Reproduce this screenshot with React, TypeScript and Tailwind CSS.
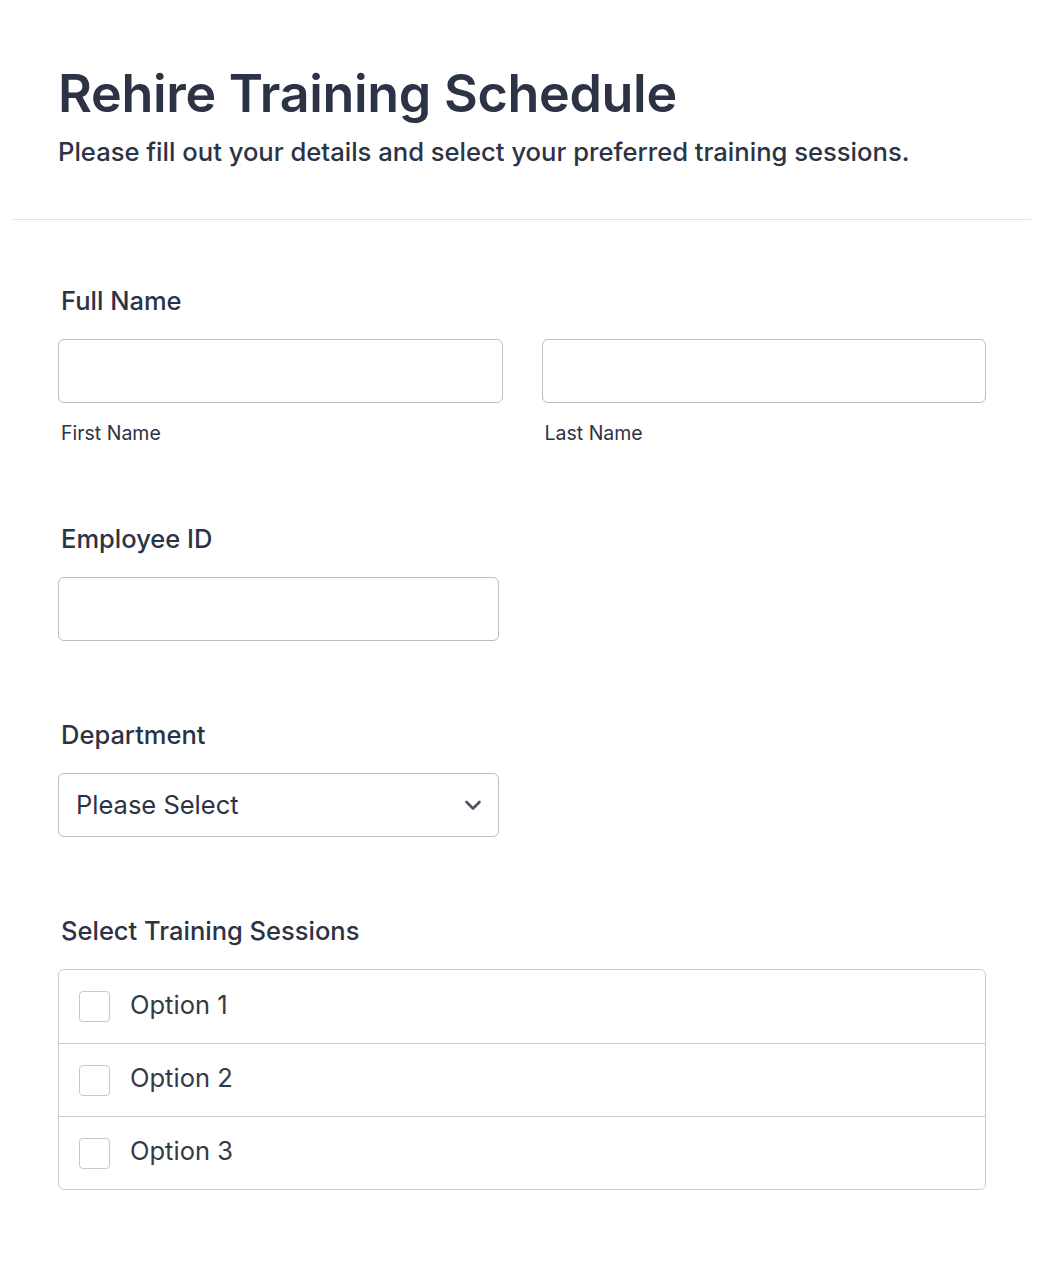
import { useState } from 'react';

const OPTIONS = ['Option 1', 'Option 2', 'Option 3'];

function Label({ children }: { children: React.ReactNode }) {
  return <label className="block pl-[3px] text-[25.5px] font-medium leading-[34px] text-[#2c3345]">{children}</label>;
}

export default function App() {
  const [checked, setChecked] = useState<Record<string, boolean>>({});

  return (
    <div className="min-h-screen bg-white font-['Inter',_'Liberation_Sans',_sans-serif] text-[#2c3345]">
      <div className="mx-[13px]">
        {/* Header */}
        <header className="px-[45px] pt-[63px] pb-[49px] border-b border-[#e0e2e7]">
          <h1 className="text-[52px] font-semibold leading-[62px] tracking-[-0.3px]">Rehire Training Schedule</h1>
          <p className="mt-[9px] text-[25.6px] font-medium leading-[36px]">
            Please fill out your details and select your preferred training sessions.
          </p>
        </header>

        <form className="px-[45px] pt-[64px]">
          {/* Full Name */}
          <section>
            <Label>Full Name</Label>
            <div className="mt-[21px] grid grid-cols-2 gap-[39px]">
              <div>
                <input className="block h-[64px] w-full rounded-[6px] border border-[#b8bdc9] px-4 text-[24px] outline-none" />
                <span className="mt-[18px] block pl-[3px] text-[19.5px] leading-[24px]">First Name</span>
              </div>
              <div>
                <input className="block h-[64px] w-full rounded-[6px] border border-[#b8bdc9] px-4 text-[24px] outline-none" />
                <span className="mt-[18px] block pl-[3px] text-[19.5px] leading-[24px]">Last Name</span>
              </div>
            </div>
          </section>

          {/* Employee ID */}
          <section className="mt-[77px]">
            <Label>Employee ID</Label>
            <input className="mt-[21px] block h-[64px] w-[441px] rounded-[6px] border border-[#b8bdc9] px-4 text-[24px] outline-none" />
          </section>

          {/* Department */}
          <section className="mt-[77px]">
            <Label>Department</Label>
            <div className="mt-[21px] flex h-[64px] w-[441px] items-center justify-between rounded-[6px] border border-[#b8bdc9] pl-[17px] pr-[16px]">
              <span className="text-[25.5px]">Please Select</span>
              <svg width="18" height="12" viewBox="0 0 18 12" fill="none">
                <path d="M2.5 3l6.5 6.5L15.5 3" stroke="#4b5262" strokeWidth="2.6" strokeLinecap="round" strokeLinejoin="round" />
              </svg>
            </div>
          </section>

          {/* Training sessions */}
          <section className="mt-[77px]">
            <Label>Select Training Sessions</Label>
            <div className="mt-[21px] rounded-[6px] border border-[#c9ccd3]">
              {OPTIONS.map((opt, i) => (
                <label
                  key={opt}
                  className={`flex h-[73px] cursor-pointer items-center gap-[20px] pl-[20px] ${i > 0 ? 'border-t border-[#c9ccd3]' : ''}`}
                >
                  <input
                    type="checkbox"
                    checked={!!checked[opt]}
                    onChange={() => setChecked((c) => ({ ...c, [opt]: !c[opt] }))}
                    className="h-[31px] w-[31px] appearance-none rounded-[4px] border border-[#c3c8d2] bg-white"
                  />
                  <span className="-mt-[3px] text-[25.5px] text-[#343a48]">{opt}</span>
                </label>
              ))}
            </div>
          </section>
        </form>
      </div>
    </div>
  );
}
